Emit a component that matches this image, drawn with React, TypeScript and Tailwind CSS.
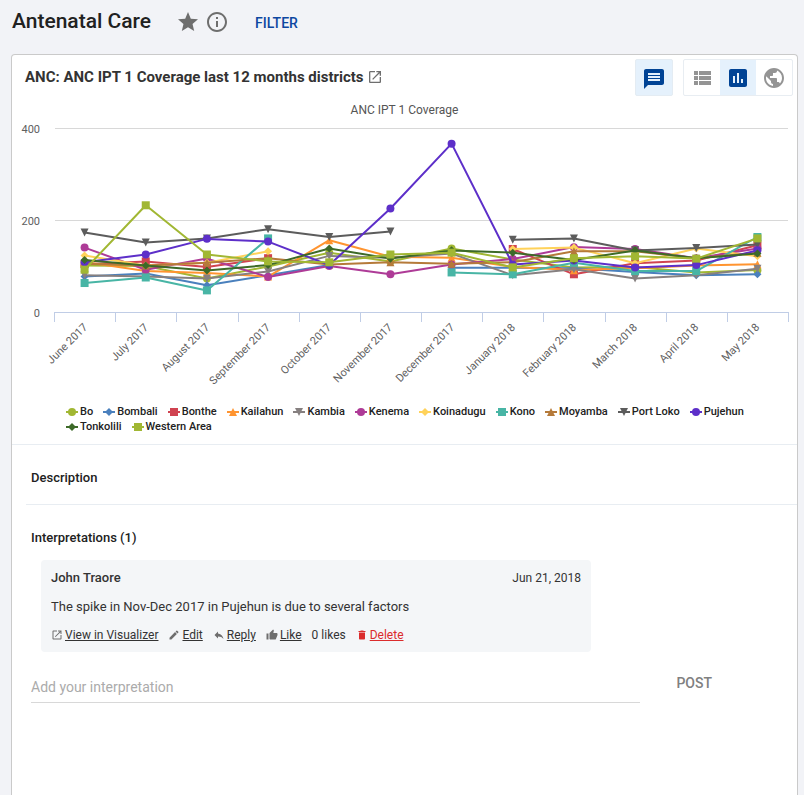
import React from "react";

type Shape = "circle" | "diamond" | "square" | "triangle" | "triangleDown";

type Series = {
  name: string;
  color: string;
  shape: Shape;
  values: (number | null)[];
};

const MONTHS = [
  "June 2017",
  "July 2017",
  "August 2017",
  "September 2017",
  "October 2017",
  "November 2017",
  "December 2017",
  "January 2018",
  "February 2018",
  "March 2018",
  "April 2018",
  "May 2018",
];

const SERIES: Series[] = [
  { name: "Bo", color: "#a1b733", shape: "circle", values: [101, 100, 73, 99, 129, 110, 138, 114, 97, 98, 86, 91] },
  { name: "Bombali", color: "#4a80bd", shape: "diamond", values: [77, 84, 58, 80, 102, null, 96, 96, 95, 87, 80, 82] },
  { name: "Bonthe", color: "#d04350", shape: "square", values: [104, 110, 98, 117, null, null, null, 137, 82, 106, 112, 145] },
  { name: "Kailahun", color: "#ff9430", shape: "triangle", values: [109, 89, 85, 77, 156, 120, 118, 98, 91, 95, 101, 104] },
  { name: "Kambia", color: "#868080", shape: "triangleDown", values: [80, 77, 73, 88, 122, 118, 127, 80, 93, 73, 80, 94] },
  { name: "Kenema", color: "#ae3b97", shape: "circle", values: [140, 92, 116, 76, 100, 82, 103, 115, 141, 137, 117, 138] },
  { name: "Koinadugu", color: "#ffd25a", shape: "diamond", values: [123, 101, 107, 132, null, null, null, 137, 140, 106, 138, 121] },
  { name: "Kono", color: "#48b5a5", shape: "square", values: [63, 75, 47, 160, null, null, 86, 82, 107, 89, 89, 163] },
  { name: "Moyamba", color: "#b57a3a", shape: "triangle", values: [105, 101, 107, 117, 103, 108, 105, 108, 132, 132, 117, 129] },
  { name: "Port Loko", color: "#5c5c5c", shape: "triangleDown", values: [173, 151, 160, 180, 163, 175, null, 157, 160, 134, 139, 147] },
  { name: "Pujehun", color: "#5d2fc9", shape: "circle", values: [108, 125, 159, 153, 102, 225, 366, 103, 112, 97, 102, 134] },
  { name: "Tonkolili", color: "#3d6a28", shape: "diamond", values: [113, 101, 90, 102, 138, 116, 134, 129, 113, 134, 117, 127] },
  { name: "Western Area", color: "#a1b733", shape: "square", values: [92, 232, 125, 110, 108, 125, 129, 97, 117, 121, 116, 160] },
];

const AXIS_LEFT = 42;
const AXIS_RIGHT = 776;
const AXIS_BOTTOM = 193;
const AXIS_HEIGHT = 184;
const STEP = (AXIS_RIGHT - AXIS_LEFT) / MONTHS.length;

const xAt = (i: number) => AXIS_LEFT + STEP * (i + 0.5);
const yAt = (v: number) => AXIS_BOTTOM - (v / 400) * AXIS_HEIGHT;

function Marker({ shape, x, y, color }: { shape: Shape; x: number; y: number; color: string }) {
  if (shape === "circle") return <circle cx={x} cy={y} r="4" fill={color} />;
  if (shape === "square") return <rect x={x - 4} y={y - 4} width="8" height="8" fill={color} />;
  const points = {
    diamond: [[0, -4], [4, 0], [0, 4], [-4, 0]],
    triangle: [[0, -4], [4, 4], [-4, 4]],
    triangleDown: [[-4, -4], [4, -4], [0, 4]],
  }[shape];
  return <polygon points={points.map(([dx, dy]) => `${x + dx},${y + dy}`).join(" ")} fill={color} />;
}

function linePath(values: (number | null)[]) {
  let pen = "M";
  let d = "";
  values.forEach((v, i) => {
    if (v === null) {
      pen = "M";
      return;
    }
    d += `${pen}${xAt(i).toFixed(1)} ${yAt(v).toFixed(1)}`;
    pen = "L";
  });
  return d;
}

function Chart() {
  return (
    <svg viewBox="0 0 785 277" className="block w-full" role="img" aria-label="ANC IPT 1 Coverage by district">
      {[200, 400].map((v) => (
        <line key={v} x1={AXIS_LEFT + 1} x2={AXIS_RIGHT} y1={yAt(v) + 0.5} y2={yAt(v) + 0.5} stroke="#d8d8d8" />
      ))}
      <line x1={AXIS_LEFT} x2={AXIS_RIGHT + 1} y1={AXIS_BOTTOM + 0.5} y2={AXIS_BOTTOM + 0.5} stroke="#c0cde6" />
      {Array.from({ length: MONTHS.length + 1 }, (_, i) => {
        const x = Math.round(AXIS_LEFT + STEP * i) + 0.5;
        return <line key={i} x1={x} x2={x} y1={AXIS_BOTTOM} y2={AXIS_BOTTOM + 10} stroke="#c0cde6" />;
      })}
      {[0, 200, 400].map((v) => (
        <text key={v} x="28" y={yAt(v) + 5} textAnchor="end" fill="#606060" className="text-[11px]">
          {v}
        </text>
      ))}
      {MONTHS.map((m, i) => {
        const x = Math.round(xAt(i)) + 3;
        return (
          <text key={m} x={x} y="209" transform={`rotate(-45 ${x} 209)`} textAnchor="end" fill="#606060" className="text-[11px]">
            {m}
          </text>
        );
      })}
      {SERIES.map((s) => (
        <g key={s.name}>
          <path d={linePath(s.values)} fill="none" stroke={s.color} strokeWidth="2" strokeLinejoin="round" />
          {s.values.map((v, i) =>
            v === null ? null : <Marker key={i} shape={s.shape} x={xAt(i)} y={yAt(v)} color={s.color} />
          )}
        </g>
      ))}
    </svg>
  );
}

const ICONS = {
  star: "M12 17.27L18.18 21l-1.64-7.03L22 9.24l-7.19-.61L12 2 9.19 8.63 2 9.24l5.46 4.73L5.82 21z",
  info: "M11 17h2v-6h-2v6zm1-15C6.48 2 2 6.48 2 12s4.48 10 10 10 10-4.48 10-10S17.52 2 12 2zm0 18c-4.41 0-8-3.59-8-8s3.59-8 8-8 8 3.59 8 8-3.59 8-8 8zM11 9h2V7h-2v2z",
  launch: "M19 19H5V5h7V3H5c-1.11 0-2 .9-2 2v14c0 1.1.89 2 2 2h14c1.1 0 2-.9 2-2v-7h-2v7zM14 3v2h3.59l-9.83 9.83 1.41 1.41L19 6.41V10h2V3h-7z",
  message: "M20 2H4c-1.1 0-1.99.9-1.99 2L2 22l4-4h14c1.1 0 2-.9 2-2V4c0-1.1-.9-2-2-2zm-2 12H6v-2h12v2zm0-3H6V9h12v2zm0-3H6V6h12v2z",
  list: "M4 14h4v-4H4v4zm0 5h4v-4H4v4zM4 9h4V5H4v4zm5 5h12v-4H9v4zm0 5h12v-4H9v4zM9 5v4h12V5H9z",
  chart: "M19 3H5c-1.1 0-2 .9-2 2v14c0 1.1.9 2 2 2h14c1.1 0 2-.9 2-2V5c0-1.1-.9-2-2-2zM9 17H7v-7h2v7zm4 0h-2V7h2v10zm4 0h-2v-4h2v4z",
  globe: "M12 2C6.48 2 2 6.48 2 12s4.48 10 10 10 10-4.48 10-10S17.52 2 12 2zm-1 17.93c-3.95-.49-7-3.85-7-7.93 0-.62.08-1.21.21-1.79L9 15v1c0 1.1.9 2 2 2v1.93zm6.9-2.54c-.26-.81-1-1.39-1.9-1.39h-1v-3c0-.55-.45-1-1-1H8v-2h2c.55 0 1-.45 1-1V7h2c1.1 0 2-.9 2-2v-.41c2.93 1.19 5 4.06 5 7.41 0 2.08-.8 3.97-2.1 5.39z",
  edit: "M3 17.25V21h3.75L17.81 9.94l-3.75-3.75L3 17.25zM20.71 7.04c.39-.39.39-1.02 0-1.41l-2.34-2.34c-.39-.39-1.02-.39-1.41 0l-1.83 1.83 3.75 3.75 1.83-1.83z",
  reply: "M10 9V5l-7 7 7 7v-4.1c5 0 8.5 1.6 11 5.1-1-5-4-10-11-11z",
  like: "M1 21h4V9H1v12zm22-11c0-1.1-.9-2-2-2h-6.31l.95-4.57.03-.32c0-.41-.17-.79-.44-1.06L14.17 1 7.59 7.59C7.22 7.95 7 8.45 7 9v10c0 1.1.9 2 2 2h9c.83 0 1.54-.5 1.84-1.22l3.02-7.05c.09-.23.14-.47.14-.73v-2z",
  trash: "M6 19c0 1.1.9 2 2 2h8c1.1 0 2-.9 2-2V7H6v12zM19 4h-3.5l-1-1h-5l-1 1H5v2h14V4z",
};

function Icon({ name, className }: { name: keyof typeof ICONS; className: string }) {
  return (
    <svg viewBox="0 0 24 24" fill="currentColor" aria-hidden="true" className={`shrink-0 ${className}`}>
      <path d={ICONS[name]} />
    </svg>
  );
}

function Action({ icon, label }: { icon: keyof typeof ICONS; label: string }) {
  return (
    <a href="#" className="flex items-center gap-0.5">
      <Icon name={icon} className="size-3 text-[#6e6e6e]" />
      <span className="underline">{label}</span>
    </a>
  );
}

export default function App() {
  return (
    <div className="flex min-h-screen flex-col bg-[#f2f3f7] font-['Roboto',sans-serif] text-[#212121]">
      <header className="flex h-[54px] items-start pt-2 pl-3">
        <h1 className="text-[21px] leading-[26px] font-medium">Antenatal Care</h1>
        <div className="ml-[25px] flex items-center gap-[5px] pt-0.5 text-[#6e6e6e]">
          <button type="button" aria-label="Star dashboard">
            <Icon name="star" className="size-6" />
          </button>
          <button type="button" aria-label="Dashboard details">
            <Icon name="info" className="size-6" />
          </button>
        </div>
        <button type="button" className="ml-[26px] pt-[3px] text-sm leading-6 font-medium text-[#0d47a1]">
          FILTER
        </button>
      </header>

      <main className="mr-1.5 ml-[11px] flex flex-1 flex-col rounded-t border border-b-0 border-[#cacaca] bg-white">
        <div className="flex items-start justify-between pt-1 pr-1 pl-[13px]">
          <h2 className="flex items-center gap-[3px] pt-2 text-[15px] leading-5 font-bold text-[#333]">
            ANC: ANC IPT 1 Coverage last 12 months districts
            <a href="#" aria-label="Open in app" className="text-[#6e6e6e]">
              <Icon name="launch" className="size-4" />
            </a>
          </h2>
          <div className="flex gap-2.5">
            <button
              type="button"
              aria-label="Show interpretations"
              className="flex h-[37px] w-[38px] items-center justify-center rounded-xs border border-[#e4ecf3] bg-[#e5f1fc] pt-0.5 text-[#004395]"
            >
              <Icon name="message" className="size-6" />
            </button>
            <div className="flex h-[37px] rounded-xs border border-[#e8edf2] text-[#949494]">
              <button type="button" aria-label="View as table" className="flex w-9 items-center justify-center">
                <Icon name="list" className="size-6" />
              </button>
              <button
                type="button"
                aria-label="View as chart"
                className="flex w-9 items-center justify-center bg-[#e5f1fc] text-[#004395]"
              >
                <Icon name="chart" className="size-6" />
              </button>
              <button type="button" aria-label="View as map" className="flex w-9 items-center justify-center">
                <Icon name="globe" className="size-6" />
              </button>
            </div>
          </div>
        </div>

        <h3 className="mt-[5px] text-center text-xs leading-[18px] text-[#555]">ANC IPT 1 Coverage</h3>
        <Chart />

        <ul className="flex flex-wrap gap-x-2.5 pt-2 pr-10 pb-2.5 pl-[54px] text-[11px] leading-[15px] font-medium text-[#222]">
          {SERIES.map((s) => (
            <li key={s.name} className="flex items-center gap-0.5">
              <svg viewBox="0 0 12 10" className="h-2.5 w-3" aria-hidden="true">
                <line x1="0" x2="12" y1="5" y2="5" stroke={s.color} strokeWidth="2" />
                <Marker shape={s.shape} x={6} y={5} color={s.color} />
              </svg>
              {s.name}
            </li>
          ))}
        </ul>

        <section className="border-t border-[#e8edf2] pl-3.5">
          <h3 className="px-[5px] pt-[25px] pb-[18px] text-[13px] leading-4 font-medium">Description</h3>
        </section>

        <section className="ml-3.5 border-t border-[#e8edf2] pt-[25px] pl-[5px]">
          <h3 className="text-[13px] leading-4 font-medium">Interpretations (1)</h3>

          <article className="mt-3.5 ml-2.5 max-w-[550px] rounded bg-[#f4f6f8] p-2.5 pb-[9px] text-[13px] text-[#333]">
            <div className="flex items-center justify-between leading-4">
              <h4 className="font-medium">John Traore</h4>
              <time className="text-xs leading-4">Jun 21, 2018</time>
            </div>
            <p className="mt-3 leading-[18px]">The spike in Nov-Dec 2017 in Pujehun is due to several factors</p>
            <div className="mt-[11px] flex flex-wrap items-center gap-2.5 text-xs leading-4">
              <Action icon="launch" label="View in Visualizer" />
              <Action icon="edit" label="Edit" />
              <Action icon="reply" label="Reply" />
              <Action icon="like" label="Like" />
              <span>0 likes</span>
              <button type="button" className="flex items-center gap-0.5 text-[#db2c2c]">
                <Icon name="trash" className="size-3" />
                <span className="underline">Delete</span>
              </button>
            </div>
          </article>

          <form className="mt-5 flex items-start">
            <input
              type="text"
              aria-label="Add your interpretation"
              placeholder="Add your interpretation"
              className="h-[31px] min-w-0 flex-1 border-b border-[#d8d8d8] text-sm outline-none placeholder:text-[#ababab]"
            />
            <button type="button" className="mr-[85px] ml-9 text-sm leading-[22px] font-medium text-[#808080]">
              POST
            </button>
          </form>
        </section>
      </main>
    </div>
  );
}
